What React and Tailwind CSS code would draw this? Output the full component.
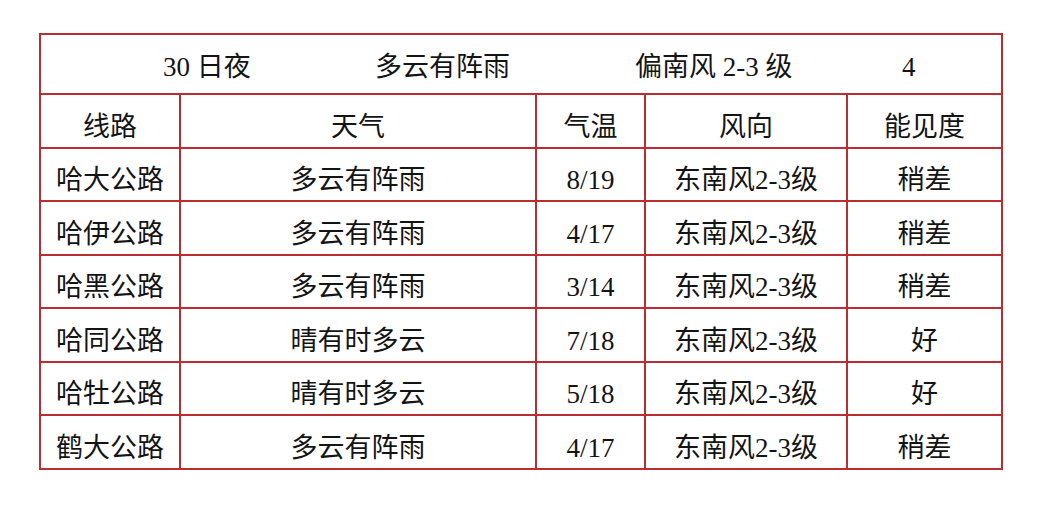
const rows = [
  ["哈大公路", "多云有阵雨", "8/19", "东南风2-3级", "稍差"],
  ["哈伊公路", "多云有阵雨", "4/17", "东南风2-3级", "稍差"],
  ["哈黑公路", "多云有阵雨", "3/14", "东南风2-3级", "稍差"],
  ["哈同公路", "晴有时多云", "7/18", "东南风2-3级", "好"],
  ["哈牡公路", "晴有时多云", "5/18", "东南风2-3级", "好"],
  ["鹤大公路", "多云有阵雨", "4/17", "东南风2-3级", "稍差"],
];

const heights = ["h-[53px]", "h-[54px]", "h-[53px]", "h-[54px]", "h-[53px]", "h-[54px]"];

export default function App() {
  const cell = "border-2 border-[#bb2d30] text-center align-middle p-0";
  return (
    <div className="min-h-screen bg-white pt-[33px] pl-[39px] font-['Liberation_Serif','Noto_Sans_CJK_SC',serif] text-[27px] text-[#141414]">
      <table className="table-fixed border-collapse w-[962px]">
        <colgroup>
          <col className="w-[140px]" />
          <col className="w-[356px]" />
          <col className="w-[109px]" />
          <col className="w-[202px]" />
          <col className="w-[155px]" />
        </colgroup>
        <tbody>
          <tr className="h-[60px]">
            <td colSpan={5} className="border-2 border-[#bb2d30] p-0 align-middle">
              <div className="flex pl-[122px] pt-[7px] leading-none whitespace-nowrap">
                <span className="w-[212px]">30 日夜</span>
                <span className="w-[260px]">多云有阵雨</span>
                <span className="w-[267px]">偏南风 2-3 级</span>
                <span>4</span>
              </div>
            </td>
          </tr>
          <tr className="h-[54px]">
            {["线路", "天气", "气温", "风向", "能见度"].map((t) => (
              <td key={t} className={cell}>
                <div className="pt-[12px] leading-none">{t}</div>
              </td>
            ))}
          </tr>
          {rows.map((r, i) => (
            <tr key={i} className={heights[i]}>
              {r.map((t, j) => (
                <td key={j} className={cell}>
                  <div className="pt-[12px] leading-none">{t}</div>
                </td>
              ))}
            </tr>
          ))}
        </tbody>
      </table>
    </div>
  );
}
